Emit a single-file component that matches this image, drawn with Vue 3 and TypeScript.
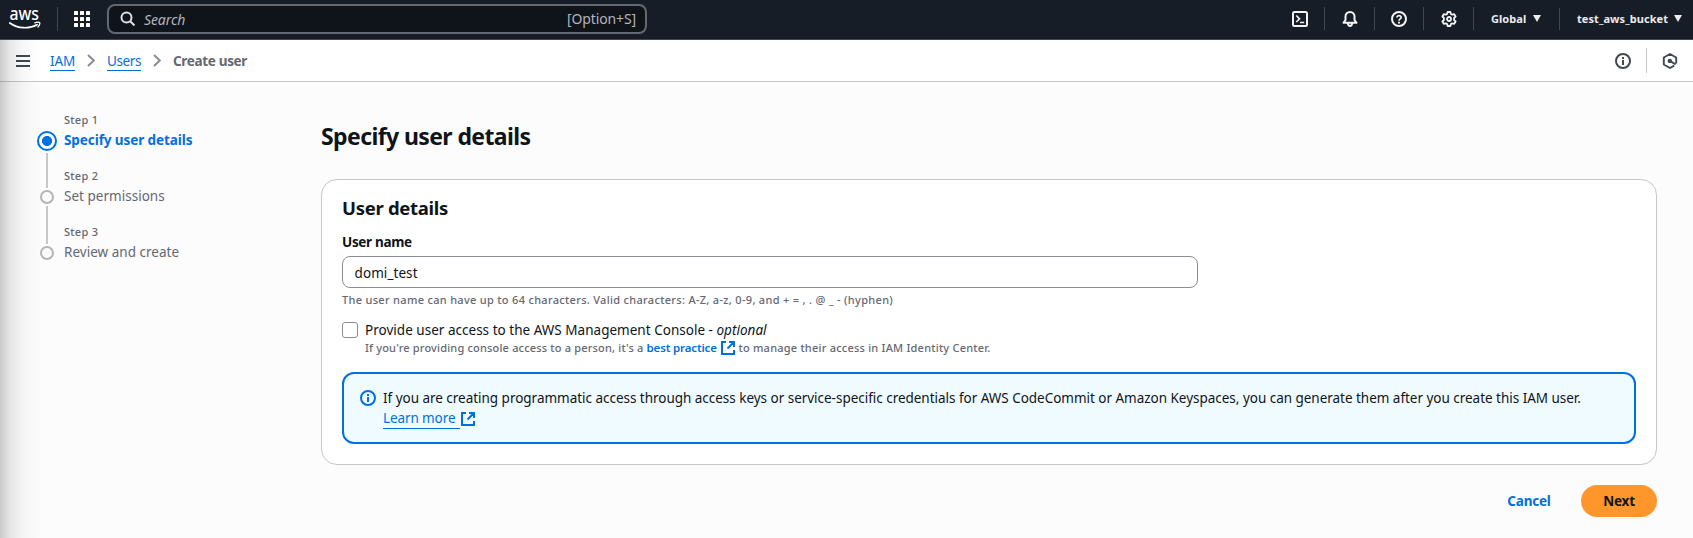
<script setup lang="ts">
import { ref } from 'vue'
interface Step { label: string; title: string; active: boolean }

const steps: Step[] = [
  { label: 'Step 1', title: 'Specify user details', active: true },
  { label: 'Step 2', title: 'Set permissions', active: false },
  { label: 'Step 3', title: 'Review and create', active: false },
]
const userName = ref('domi_test')
const consoleAccess = ref(false)
</script>

<template>
  <div class="page">
    <header class="topbar">
      <svg class="aws" viewBox="0 -6 32 38" width="32" height="38">
        <text x="0.4" y="13.800" textLength="29.500" lengthAdjust="spacingAndGlyphs">aws</text>
        <path d="M.8 17c8.200 6 19.600 6 27.200 1.700" fill="none" stroke="#fff" stroke-width="1.700" stroke-linecap="round" />
        <path d="M25.800 16.800c2-.8 4.600-.8 4.900 0s-.4 2.800-1.700 4.200" fill="none" stroke="#fff" stroke-width="1.300" stroke-linecap="round" stroke-linejoin="round" />
      </svg>
      <i class="vsep first"></i>
      <svg class="grid" viewBox="0 0 16 16" width="16" height="16" fill="#fff">
        <template v-for="r in 3" :key="r">
          <rect v-for="c in 3" :key="c" :x="(c - 1) * 6" :y="(r - 1) * 6" width="4" height="4" rx=".6" />
        </template>
      </svg>
      <div class="search">
        <svg viewBox="0 0 16 16" width="16" height="16" fill="none" stroke="#dedee3" stroke-width="2">
          <circle cx="6.500" cy="6.500" r="5" /><path d="M10.200 10.200 14.500 14.500" />
        </svg>
        <em>Search</em>
        <span>[Option+S]</span>
      </div>
      <nav class="tools">
        <a class="tool"><svg viewBox="0 0 16 16"><rect x="1" y="1" width="14" height="14" rx="1.500" /><path d="M4.300 4.500 7.500 7.800 4.300 11M8 11.500h4.200" stroke-width="1.700" /></svg></a>
        <a class="tool"><svg viewBox="0 0 16 16"><path d="M3.500 9V5.500C3.500 3 5.500 1 8 1s4.500 2 4.500 4.500V9l2 2.800h-13zM6 12.200c0 3.600 4 3.600 4 0" stroke-linejoin="round" /></svg></a>
        <a class="tool narrow"><svg viewBox="0 0 16 16"><circle cx="8" cy="8" r="7" /><path d="M5.900 6.600C5.900 3.900 10.200 4 10.200 6.500 10.200 8 8 7.900 8 9.800" stroke-width="1.700" /><path d="M8 10.700v1.700" /></svg></a>
        <a class="tool"><svg viewBox="0 0 16 16"><path d="M6.600 1h2.800l.5 2 1.300.7 2-.6 1.400 2.400-1.500 1.500v2l1.500 1.500-1.400 2.400-2-.6-1.300.7-.5 2H6.600l-.5-2-1.300-.7-2 .6-1.400-2.400L2.900 9V7L1.400 5.500l1.400-2.400 2 .6L6.100 3z" stroke-width="1.800" stroke-linejoin="round" /><circle cx="8" cy="8" r="2" stroke-width="1.800" /></svg></a>
        <a class="menu region"><b>Global</b><svg viewBox="0 0 8 7" width="8" height="7"><path d="M0 0h8L4 7z" /></svg></a>
        <a class="menu account"><b>test_aws_bucket</b><svg viewBox="0 0 8 7" width="8" height="7"><path d="M0 0h8L4 7z" /></svg></a>
      </nav>
    </header>

    <div class="crumbs">
      <svg class="burger" viewBox="0 0 14 12" width="14" height="12"><path d="M0 1h14M0 6h14M0 11h14" stroke="#424650" stroke-width="2" /></svg>
      <a class="link iam">IAM</a>
      <svg class="chev" viewBox="0 0 8 13" width="8" height="13"><path d="M1 1l5.800 5.500L1 12" /></svg>
      <a class="link users">Users</a>
      <svg class="chev" viewBox="0 0 8 13" width="8" height="13"><path d="M1 1l5.800 5.500L1 12" /></svg>
      <b class="current">Create user</b>
      <svg class="info" viewBox="0 0 16 16" width="16" height="16"><circle cx="8" cy="8" r="7" fill="none" stroke="#424650" stroke-width="2" /><path d="M7 4h2v2H7zM7 7h2v5H7z" fill="#424650" /></svg>
      <i class="bar"></i>
      <svg class="hex" viewBox="0 0 16 16" width="16" height="16"><path d="M14.200 10.500v-6L8 1 1.800 4.500v7L8 15l4.200-2.400" fill="none" stroke="#424650" stroke-width="1.900" stroke-linejoin="round" /><circle cx="7.800" cy="7.900" r="2.200" fill="#424650" /><path d="M8 8l5.600 3.300" stroke="#424650" stroke-width="2" /></svg>
    </div>

    <div class="body">
      <ol class="steps">
        <li v-for="s in steps" :key="s.label" :class="{ active: s.active }">
          <i class="dot"></i>
          <div class="steptext"><small>{{ s.label }}</small><span>{{ s.title }}</span></div>
        </li>
      </ol>
      <main>
        <h1>Specify user details</h1>
        <section class="card">
          <h2>User details</h2>
          <label class="name" for="user">User name</label>
          <input id="user" v-model="userName" class="field" type="text" />
          <p class="hint">The user name can have up to 64 characters. Valid characters: A-Z, a-z, 0-9, and + = , . @ _ - (hyphen)</p>
          <div class="option">
            <input v-model="consoleAccess" type="checkbox" class="check" />
            <div>
              <p class="opt">Provide user access to the AWS Management Console - <em>optional</em></p>
              <p class="optnote"><span>If you're providing console access to a person, it's a</span><a>best practice</a><svg class="ext" viewBox="0 0 14 14" width="14" height="14"><path d="M5 1H1v12h12V9M8 1h5v5M13 1 6.500 7.500" /></svg><span class="tail">to manage their access in IAM Identity Center.</span></p>
            </div>
          </div>
          <div class="alert">
            <svg class="ainfo" viewBox="0 0 16 16" width="16" height="16"><circle cx="8" cy="8" r="7" fill="none" stroke="#0070e0" stroke-width="2" /><path d="M7 4h2v2H7zM7 7h2v5H7z" fill="#0070e0" /></svg>
            <div>
              <p>If you are creating programmatic access through access keys or service-specific credentials for AWS CodeCommit or Amazon Keyspaces, you can generate them after you create this IAM user.</p>
              <p class="more"><a>Learn more</a><svg class="ext" viewBox="0 0 14 14" width="14" height="14"><path d="M5 1H1v12h12V9M8 1h5v5M13 1 6.500 7.500" /></svg></p>
            </div>
          </div>
        </section>
        <div class="actions">
          <button class="cancel">Cancel</button>
          <button class="next">Next</button>
        </div>
      </main>
    </div>
    <div class="edge"></div>
  </div>
</template>

<style>
html, body { background: #fcfcfc; overflow: hidden; }
</style>
<style scoped>
* { box-sizing: border-box; }
.page { position: relative; height: 538px; overflow: hidden; background: #fcfcfc; color: #0f141a; font: 13.5px/20px "Noto Sans", "Open Sans", sans-serif; letter-spacing: -.025px; }
h1, h2, p, ol { margin: 0; padding: 0; }
svg { display: block; flex: none; }
b { font-weight: 700; }
.topbar { display: flex; align-items: center; height: 40px; padding-bottom: 2px; background: #161d26; border-bottom: 1px solid #424650; color: #fff; }
.aws { margin-left: 9px; }
.aws text { font: 500 17.5px/20px "Noto Sans", sans-serif; letter-spacing: 0; fill: #fff; }
.vsep { width: 1px; height: 24px; background: #424650; }
.vsep.first { margin: 0 16px; }
.search { display: flex; align-items: center; width: 540px; height: 30px; margin-left: 17px; padding: 0 9px 0 11px; border: 2px solid #656871; border-radius: 8px; background: #0f141a; }
.search em { margin: 2px 0 0 8px; font-size: 14px; color: #b4b4bb; letter-spacing: -.1px; }
.search span { margin-left: auto; font-size: 14px; color: #b4b4bb; letter-spacing: -.12px; }
.tools { display: flex; align-items: center; margin-left: auto; }
.tool { display: flex; align-items: center; justify-content: center; width: 50px; height: 23px; border-right: 1px solid #424650; }
.tool.narrow { width: 49px; }
.tool svg { width: 16px; height: 16px; fill: none; stroke: #f3f3f7; stroke-width: 2; }
.menu { display: flex; align-items: center; justify-content: space-between; height: 22px; font-size: 11px; letter-spacing: .06px; color: #ebebf0; }
.menu svg { fill: #ebebf0; }
.region { width: 86px; padding: 0 18px 0 17px; border-right: 1px solid #424650; }
.account { width: 133px; padding: 0 11px 0 17px; }
.crumbs { display: flex; align-items: center; height: 42px; background: #fff; border-bottom: 1px solid #c6c6cd; }
.burger { margin: 0 20px 0 16px; }
.chev { fill: none; stroke: #8c8c94; stroke-width: 2; }
.link { padding-top: 1px; color: #0070e0; border-bottom: 1px solid #0070e0; line-height: 18px; white-space: nowrap; }
.iam { width: 25px; margin-right: 12px; letter-spacing: -.1px; }
.users { width: 34px; margin: 0 12px; letter-spacing: -.4px; }
.current { margin-left: 12px; color: #656871; letter-spacing: -.33px; }
.info { margin-left: auto; }
.bar { width: 1px; height: 25px; margin: 0 15px; background: #c6c6cd; }
.hex { margin-right: 15px; }
.body { display: flex; }
.steps { width: 321px; padding: 29px 0 0 37px; list-style: none; }
.steps li { display: grid; grid-template-columns: 20px 1fr; column-gap: 7px; height: 56px; position: relative; color: #656871; }
.dot { width: 14px; height: 14px; margin: 23px 0 0 3px; border: 2px solid #b4b4bb; border-radius: 50%; }
.active .dot { width: 20px; height: 20px; margin: 20px 0 0; border-color: #0070e0; background: radial-gradient(circle, #0070e0 4.700px, transparent 5.300px); }
.steps li:not(:last-child)::after { content: ""; position: absolute; left: 9px; top: 39px; width: 2px; height: 38px; background: #c6c6cd; }
.steps li.active::after { top: 42px; height: 35px; }
.steptext { display: flex; flex-direction: column; }
.steps small { margin-bottom: 2px; font-size: 11px; line-height: 17px; font-weight: 500; letter-spacing: .3px; }
.steps span { letter-spacing: .02px; }
.steps .active span { font-weight: 700; color: #0070e0; letter-spacing: -.08px; }
main { width: 1336px; }
h1 { margin-top: 39px; font-size: 23px; line-height: 30px; font-weight: 700; letter-spacing: -.6px; }
.card { height: 286px; margin-top: 28px; padding: 16px 20px; border: 1px solid #c6c6cd; border-radius: 16px; background: #fff; }
h2 { font-size: 18.5px; line-height: 24px; font-weight: 700; letter-spacing: -.3px; }
.name { display: block; margin-top: 12px; font-weight: 700; letter-spacing: -.32px; }
.field { display: block; width: 856px; height: 32px; margin-top: 4px; padding: 1px 11.5px 0; border: 1px solid #8c8c94; border-radius: 8px; background: #fff; font: inherit; color: inherit; letter-spacing: .08px; outline: none; }
.hint { margin-top: 4px; font-size: 11px; line-height: 16px; font-weight: 500; letter-spacing: .31px; color: #656871; }
.option { display: flex; margin-top: 12px; }
.opt { letter-spacing: .02px; }
.check { appearance: none; width: 16px; height: 16px; margin: 2px 7px 0 0; border: 1px solid #8c8c94; border-radius: 3px; }
.optnote { display: flex; align-items: center; font-size: 11px; line-height: 16px; font-weight: 500; letter-spacing: .18px; color: #656871; white-space: nowrap; }
.optnote a { width: 70px; margin: 0 4px 0 3px; font-size: 11.5px; font-weight: 600; letter-spacing: -.15px; color: #0070e0; }
.optnote .ext { margin-right: 4px; }
.tail { letter-spacing: .22px; }
.ext { fill: none; stroke: #0070e0; stroke-width: 2; }
.alert { display: flex; height: 72px; margin-top: 16px; padding: 14px 16px; border: 2px solid #0070e0; border-radius: 12px; background: #f0fbff; white-space: nowrap; }
.ainfo { margin: 2px 7px 0 0; }
.more { display: flex; align-items: center; color: #0070e0; }
.more a { width: 77px; margin-right: 1px; padding-top: 1px; border-bottom: 1px solid #0070e0; line-height: 19px; letter-spacing: -.1px; }
.actions { display: flex; justify-content: flex-end; margin-top: 20px; }
button { height: 32px; border: 0; background: none; font: 700 13.5px/20px "Noto Sans", sans-serif; letter-spacing: -.2px; padding: 0; }
.cancel { width: 44px; margin-right: 30px; color: #0070e0; }
.next { width: 76px; border-radius: 16px; background: #ff962b; color: #0f141a; }
.edge { position: absolute; left: 0; top: 40px; bottom: 0; width: 40px; background: linear-gradient(90deg, rgba(0,0,0,.2), rgba(0,0,0,.09) 25%, rgba(0,0,0,.03) 55%, transparent); pointer-events: none; }
</style>
